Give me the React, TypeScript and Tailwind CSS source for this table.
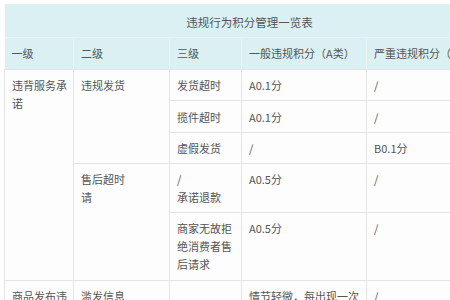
import React from 'react';

const cell = 'border border-[#e4e4e4] px-[7px] pt-[6px] pb-[6px] align-top text-left font-normal whitespace-nowrap';

function App() {
  return (
    <div
      className="w-[450px] h-[300px] overflow-hidden bg-white pl-[4px] pt-[4px]"
      style={{ fontFamily: '"Noto Sans CJK SC", "Noto Sans", sans-serif' }}
    >
      <table className="table-fixed border-collapse w-[490px] text-[11px] leading-[18px] text-[#555]">
        <colgroup>
          <col className="w-[69px]" />
          <col className="w-[96px]" />
          <col className="w-[72px]" />
          <col className="w-[125px]" />
          <col className="w-[128px]" />
        </colgroup>
        <thead className="bg-[#daf0f2]">
          <tr className="h-[33px]">
            <th colSpan={5} className="border-b border-[#e8f4f5] text-center font-normal text-[11.5px] pt-[3px]">
              违规行为积分管理一览表
            </th>
          </tr>
          <tr className="h-[32px]">
            <th className="border-r border-[#e8f4f5] px-[7px] text-left font-normal whitespace-nowrap">一级</th>
            <th className="border-r border-[#e8f4f5] px-[7px] text-left font-normal whitespace-nowrap">二级</th>
            <th className="border-r border-[#e8f4f5] px-[7px] text-left font-normal whitespace-nowrap">三级</th>
            <th className="border-r border-[#e8f4f5] px-[7px] text-left font-normal whitespace-nowrap">一般违规积分（A类）</th>
            <th className="px-[7px] text-left font-normal whitespace-nowrap">严重违规积分（B类）</th>
          </tr>
        </thead>
        <tbody className="bg-[#fdfdfd]">
          <tr>
            <td rowSpan={5} className={cell}>违背服务承<br />诺</td>
            <td rowSpan={3} className={cell}>违规发货</td>
            <td className={cell}>发货超时</td>
            <td className={cell}>A0.1分</td>
            <td className={cell}>/</td>
          </tr>
          <tr>
            <td className={cell + ' pt-[7px]'}>揽件超时</td>
            <td className={cell + ' pt-[7px]'}>A0.1分</td>
            <td className={cell + ' pt-[7px]'}>/</td>
          </tr>
          <tr>
            <td className={cell}>虚假发货</td>
            <td className={cell}>/</td>
            <td className={cell}>B0.1分</td>
          </tr>
          <tr>
            <td rowSpan={2} className={cell}>售后超时<br />请</td>
            <td className={cell + ' pb-[4px]'}>/<br />承诺退款</td>
            <td className={cell}>A0.5分</td>
            <td className={cell}>/</td>
          </tr>
          <tr>
            <td className={cell + ' pb-[7px]'}>商家无故拒<br />绝消费者售<br />后请求</td>
            <td className={cell}>A0.5分</td>
            <td className={cell}>/</td>
          </tr>
          <tr>
            <td className={cell}>商品发布违<br />规</td>
            <td className={cell}>滥发信息</td>
            <td className={cell}></td>
            <td className={cell}>情节轻微，每出现一次<br />扣A0.2分</td>
            <td className={cell}>/</td>
          </tr>
        </tbody>
      </table>
    </div>
  );
}

export default App;
